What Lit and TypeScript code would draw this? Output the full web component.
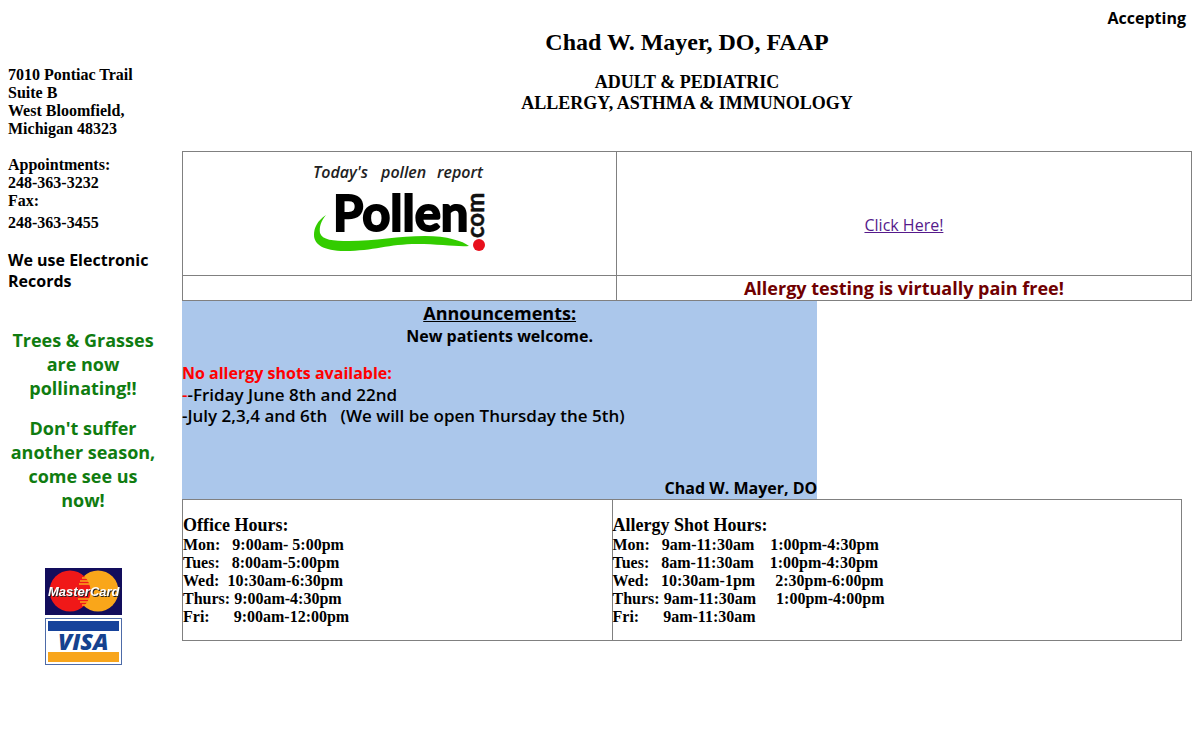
import { LitElement, html, css, svg } from "lit";
import { customElement } from "lit/decorators.js";

const officeHours = [
  "Mon:   9:00am- 5:00pm",
  "Tues:   8:00am-5:00pm",
  "Wed:  10:30am-6:30pm",
  "Thurs: 9:00am-4:30pm",
  "Fri:      9:00am-12:00pm",
];

const shotHours = [
  "Mon:   9am-11:30am    1:00pm-4:30pm",
  "Tues:   8am-11:30am    1:00pm-4:30pm",
  "Wed:   10:30am-1pm     2:30pm-6:00pm",
  "Thurs: 9am-11:30am     1:00pm-4:00pm",
  "Fri:      9am-11:30am",
];

@customElement("pollen-logo")
class PollenLogo extends LitElement {
  static styles = css`
    :host { display: inline-block; }
    svg { display: block; }
    .tag { font: italic 600 16px "Open Sans", sans-serif; fill: #222; }
    .name { font: 700 49px "Lato", sans-serif; fill: #000; stroke: #000; stroke-width: 2px; }
    .com { font: 700 24px "Lato", sans-serif; fill: #111; stroke: #111; stroke-width: 0.5px; }
  `;
  render() {
    return html`<svg width="180" height="100" viewBox="0 0 180 100" role="img" aria-label="Pollen.com">
      ${svg`
      <text class="tag" x="4" y="17">Today's</text>
      <text class="tag" x="72" y="17">pollen</text>
      <text class="tag" x="128" y="17">report</text>
      <path fill="#3c0" d="M17 54C8 60 5 67 5 74C5 83 14 90 36 90C64 90 80 83 108 83C130 83 148 86 160 85C154 80 138 75 116 75C90 75 66 80 40 80C24 80 13 79 11 72C10 66 12 60 17 54Z"/>
      <text class="name" x="24" y="70">Pollen</text>
      <text class="com" transform="translate(175 77) rotate(-90)">com</text>
      <circle cx="170" cy="84" r="6" fill="#e8101c"/>
      `}
    </svg>`;
  }
}

@customElement("card-logos")
class CardLogos extends LitElement {
  static styles = css`
    :host { display: block; }
    svg { display: block; margin: 0 auto; }
    .mc { font: italic 700 13px "Liberation Sans", sans-serif; fill: #fff; filter: drop-shadow(1px 1px 0 #222); }
    .visa { font: italic 800 23px "Open Sans", sans-serif; fill: #15428f; }
  `;
  render() {
    return html`<svg width="78" height="98" viewBox="0 0 78 98" role="img" aria-label="MasterCard and Visa accepted">
      ${svg`
      <rect x="1" y="0" width="77" height="47" fill="#120d5c"/>
      <circle cx="54" cy="23" r="20.500" fill="#f9a61a"/>
      <circle cx="26" cy="23" r="20.500" fill="#f01818"/>
      <path stroke="#f9a61a" stroke-width="1.300" d="M38 10h6M36 13h10M35 16h12M34 31h13M36 34h10M38 37h6"/>
      <text class="mc" x="4" y="28">MasterCard</text>
      <rect x="1.500" y="50.500" width="76" height="46" fill="#fff" stroke="#4d6ba8"/>
      <rect x="4" y="53" width="71" height="10" fill="#17439b"/>
      <rect x="4" y="84" width="71" height="10" fill="#f8a51b"/>
      <text class="visa" x="14" y="82">VISA</text>
      `}
    </svg>`;
  }
}

@customElement("app-root")
class AppRoot extends LitElement {
  static styles = css`
    :host {
      display: block;
      padding: 8px;
      background: #fff;
      color: #000;
      font: 700 16px/21px "Open Sans", "Noto Sans", sans-serif;
    }
    .page { display: grid; grid-template-columns: 150px minmax(0, 1fr); column-gap: 24px; align-items: start; }
    h1, h2, p, address { margin: 0; font-weight: 700; font-style: normal; }
    .serif, h1, .specialty { font-family: "Liberation Serif", serif; }
    .side { padding-top: 58px; }
    .contact { line-height: 18px; }
    .contact p + p { margin-top: 18px; }
    .fax { line-height: 21px; padding-top: 2px; }
    .records { margin-top: 17px; }
    .season { margin-top: 36px; color: #107c10; font-size: 18px; line-height: 24px; text-align: center; }
    .season p + p { margin-top: 16px; }
    card-logos { margin-top: 56px; }
    .ticker { text-align: right; padding-right: 6px; }
    h1 { font-size: 24px; line-height: 27px; text-align: center; }
    .specialty { margin: 16px 0 37px; font-size: 18px; text-align: center; }
    table { border-collapse: collapse; table-layout: fixed; width: 100%; }
    td { border: 1px solid #808080; padding: 0; }
    .first { width: 42.9%; }
    .tall { height: 123px; text-align: center; }
    .link { padding-top: 24px; height: 99px; font-weight: 400; }
    a { color: #551a8b; }
    .claim { height: 24px; line-height: 24px; font-size: 18px; color: #700000; text-align: center; }
    .news { width: 62.9%; background: #abc7eb; }
    .news h2 { font-size: 18px; line-height: 25px; text-decoration: underline; text-align: center; }
    .center { text-align: center; }
    .shots { margin-top: 16px; }
    .red { color: #f00; }
    .dates { font-size: 17px; font-weight: 600; white-space: pre-wrap; }
    .sign { margin-top: 52px; text-align: right; }
    .hours { width: 99%; }
    .hours td { padding: 15px 0 14px; vertical-align: top; }
    .hours h2 { font-size: 18px; line-height: 21px; }
    .line { line-height: 18px; white-space: pre; }
  `;

  hours(title: string, lines: string[]) {
    return html`<h2>${title}</h2>${lines.map((l) => html`<p class="line">${l}</p>`)}`;
  }

  render() {
    return html`<div class="page">
      <aside class="side">
        <address class="contact serif">
          <p>7010 Pontiac Trail<br />Suite B<br />West Bloomfield,<br />Michigan 48323</p>
          <p>Appointments:<br />248-363-3232<br />Fax:</p>
          <div class="fax">248-363-3455</div>
        </address>
        <p class="records">We use Electronic Records</p>
        <div class="season">
          <p>Trees &amp; Grasses are now pollinating!!</p>
          <p>Don't suffer another season, come see us now!</p>
        </div>
        <card-logos></card-logos>
      </aside>
      <main>
        <div class="ticker">Accepting</div>
        <h1>Chad W. Mayer, DO, FAAP</h1>
        <p class="specialty">ADULT &amp; PEDIATRIC<br />ALLERGY, ASTHMA &amp; IMMUNOLOGY</p>
        <table>
          <tr>
            <td class="first tall"><pollen-logo></pollen-logo></td>
            <td class="tall link"><a href="#pollen">Click Here!</a></td>
          </tr>
          <tr>
            <td></td>
            <td class="claim">Allergy testing is virtually pain free!</td>
          </tr>
        </table>
        <section class="news">
          <h2>Announcements:</h2>
          <p class="center">New patients welcome.</p>
          <p class="shots red">No allergy shots available:</p>
          <p class="dates"><span class="red">-</span>-Friday June 8th and 22nd</p>
          <p class="dates">-July 2,3,4 and 6th   (We will be open Thursday the 5th)</p>
          <p class="sign">Chad W. Mayer, DO</p>
        </section>
        <table class="hours serif">
          <tr>
            <td class="first">${this.hours("Office Hours:", officeHours)}</td>
            <td>${this.hours("Allergy Shot Hours:", shotHours)}</td>
          </tr>
        </table>
      </main>
    </div>`;
  }
}
